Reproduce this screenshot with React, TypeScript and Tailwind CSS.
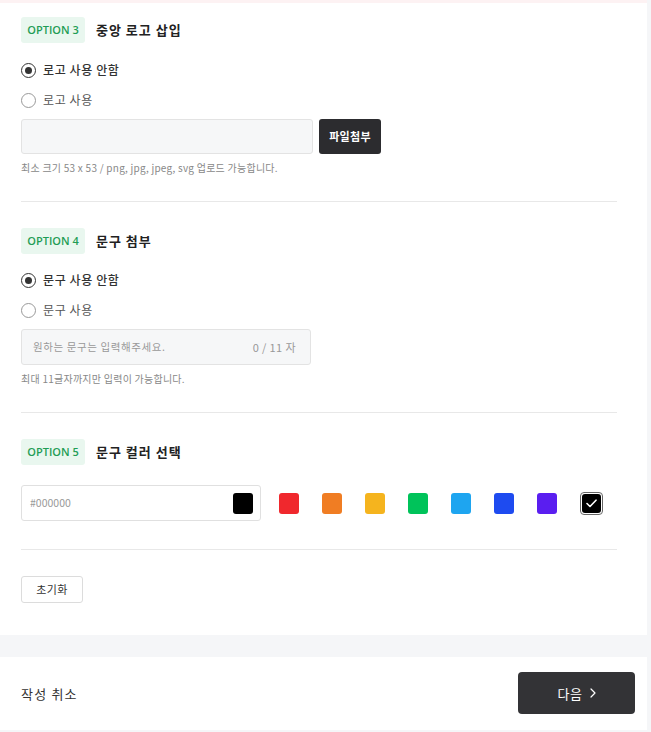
import React from "react";

const font = { fontFamily: '"Noto Sans CJK KR", "Noto Sans", sans-serif' };

function Badge({ n }: { n: number }) {
  return (
    <span className="inline-flex h-[26px] w-[64px] items-center justify-center rounded-[3px] bg-[#e9f7ef] text-[11px] font-semibold text-[#1f9d55]" style={{ fontFamily: '"Open Sans", "Noto Sans", sans-serif' }}>
      OPTION {n}
    </span>
  );
}

function Header({ n, title }: { n: number; title: string }) {
  return (
    <div className="flex items-center gap-[11px]">
      <Badge n={n} />
      <span className="text-[13px] font-bold tracking-[1px] text-[#222]">{title}</span>
    </div>
  );
}

function Radio({ checked, label }: { checked?: boolean; label: string }) {
  return (
    <div className="flex h-[20px] items-center gap-[7px]">
      {checked ? (
        <span className="flex h-[15px] w-[15px] items-center justify-center rounded-full border-[1.5px] border-[#333]">
          <span className="h-[7px] w-[7px] rounded-full bg-[#333]" />
        </span>
      ) : (
        <span className="h-[15px] w-[15px] rounded-full border border-[#999] bg-white" />
      )}
      <span className={checked ? "text-[12px] font-medium tracking-[0.6px] text-[#333]" : "text-[12px] tracking-[0.6px] text-[#555]"}>{label}</span>
    </div>
  );
}

const swatches = ["#f0282d", "#f07d23", "#f5b41e", "#00c35a", "#1ea5f0", "#1e4bf0", "#5a1ef0"];

export default function App() {
  return (
    <div className="min-h-[732px] w-[651px] bg-[#f5f6f8]" style={font}>
      <div className="w-[647px] bg-white">
        <div className="h-[3px] bg-[#fdf2f3]" />
        {/* Option 3 */}
        <div className="pl-[21px] pr-[30px]">
          <div className="pt-[14px]">
            <Header n={3} title="중앙 로고 삽입" />
            <div className="mt-[17px] flex flex-col gap-[10px]">
              <Radio checked label="로고 사용 안함" />
              <Radio label="로고 사용" />
            </div>
            <div className="mt-[9px] flex gap-[6px]">
              <div className="h-[35px] w-[292px] rounded-[3px] border border-[#e3e3e3] bg-[#f6f7f8]" />
              <button className="h-[35px] w-[62px] rounded-[3px] bg-[#2c2c2f] text-[11px] font-bold tracking-[0.3px] text-white">파일첨부</button>
            </div>
            <div className="mt-[7px] text-[10px] leading-[14px] tracking-[0.25px] text-[#888]">최소 크기 53 x 53 / png, jpg, jpeg, svg 업로드 가능합니다.</div>
            <div className="mt-[26px] h-px bg-[#e8e8e8]" />
          </div>

          {/* Option 4 */}
          <div className="pt-[26px]">
            <Header n={4} title="문구 첨부" />
            <div className="mt-[16px] flex flex-col gap-[10px]">
              <Radio checked label="문구 사용 안함" />
              <Radio label="문구 사용" />
            </div>
            <div className="mt-[9px] flex h-[36px] w-[290px] items-center justify-between rounded-[3px] border border-[#e3e3e3] bg-[#f6f7f8] pl-[11px] pr-[14px]">
              <span className="text-[10.5px] tracking-[0.6px] text-[#999]">원하는 문구는 입력해주세요.</span>
              <span className="text-[11px] tracking-[0.4px] text-[#999]">0 / 11 자</span>
            </div>
            <div className="mt-[7px] text-[10px] leading-[14px] tracking-[0.25px] text-[#888]">최대 11글자까지만 입력이 가능합니다.</div>
            <div className="mt-[26px] h-px bg-[#e8e8e8]" />
          </div>

          {/* Option 5 */}
          <div className="pt-[26px]">
            <Header n={5} title="문구 컬러 선택" />
            <div className="mt-[20px] flex items-center">
              <div className="flex h-[36px] w-[240px] items-center justify-between rounded-[3px] border border-[#e0e0e0] bg-white pl-[8px] pr-[7px]">
                <span className="text-[10.5px] text-[#999]">#000000</span>
                <span className="h-[21px] w-[20px] rounded-[3px] bg-black" />
              </div>
              <div className="ml-[18px] flex items-center gap-[23px]">
                {swatches.map((c) => (
                  <span key={c} className="h-[21px] w-[20px] rounded-[3px]" style={{ backgroundColor: c }} />
                ))}
                <span className="flex h-[23px] w-[23px] items-center justify-center rounded-[4px] border border-[#666] bg-white">
                  <span className="flex h-[19px] w-[19px] items-center justify-center rounded-[3px] bg-black">
                    <svg width="11" height="9" viewBox="0 0 11 9" fill="none">
                      <path d="M1 4.5L4 7.5L10 1.2" stroke="white" strokeWidth="1.6" strokeLinecap="round" strokeLinejoin="round" />
                    </svg>
                  </span>
                </span>
              </div>
            </div>
            <div className="mt-[28px] h-px bg-[#e8e8e8]" />
          </div>

          <div className="pb-[32px] pt-[25px]">
            <button className="h-[27px] w-[62px] rounded-[3px] border border-[#dcdcdc] bg-white text-[11px] tracking-[0.3px] text-[#333]">초기화</button>
          </div>
        </div>
      </div>

      <div className="mt-[22px] flex h-[73px] w-[647px] items-center justify-between bg-white pl-[21px] pr-[12px]">
        <span className="text-[13px] tracking-[1.2px] text-[#333]">작성 취소</span>
        <button className="flex h-[42px] w-[117px] items-center justify-center gap-[7px] rounded-[4px] bg-[#333336] text-[13px] tracking-[0.6px] text-white">
          다음
          <svg width="6" height="10" viewBox="0 0 6 10" fill="none">
            <path d="M1 1L5 5L1 9" stroke="white" strokeWidth="1.2" strokeLinecap="round" strokeLinejoin="round" />
          </svg>
        </button>
      </div>
    </div>
  );
}
